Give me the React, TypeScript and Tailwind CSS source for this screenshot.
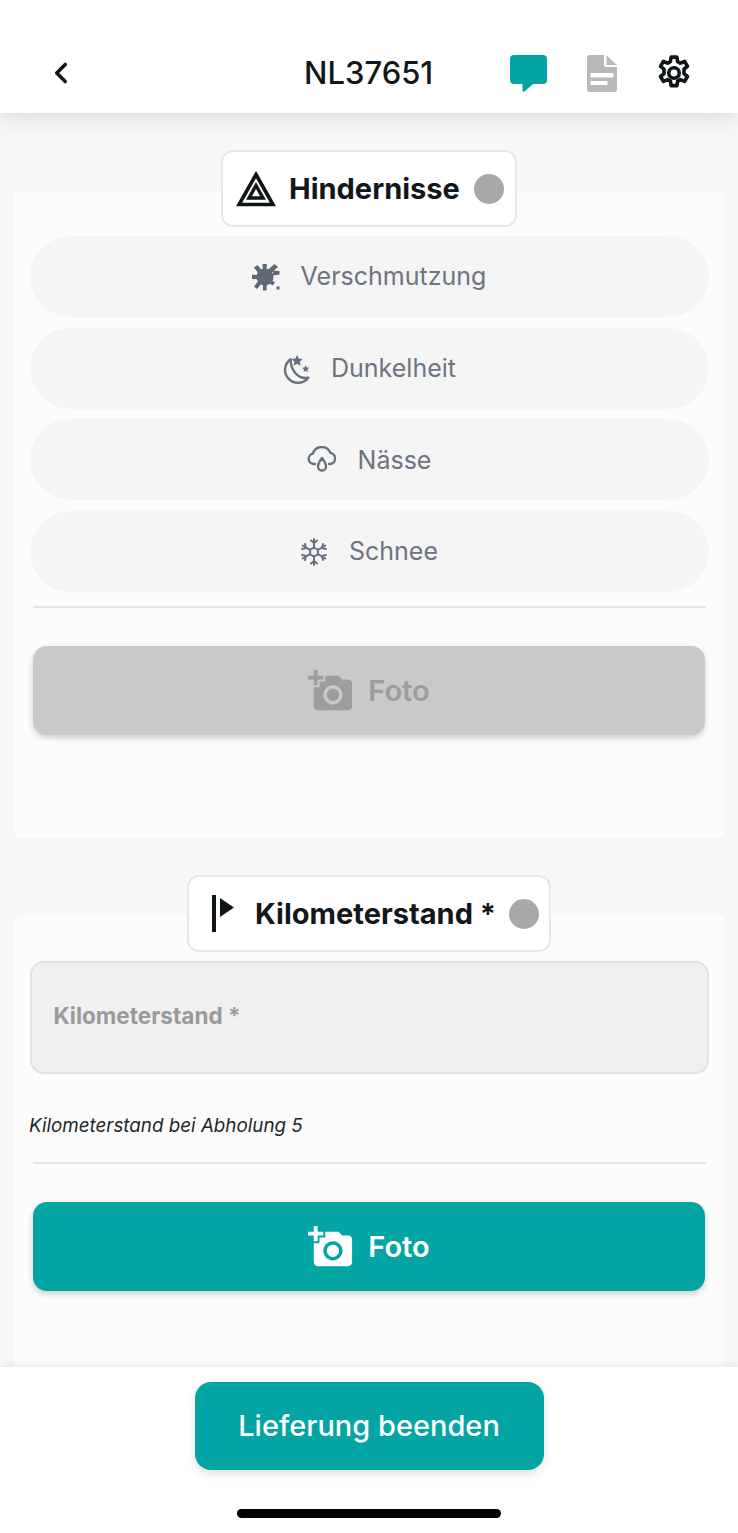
import { ChevronLeft } from 'lucide-react';
import { MdAddAPhoto } from 'react-icons/md';
import type { ReactNode } from 'react';

function ChatIcon() {
  return (
    <svg viewBox="0 0 37 37" className="w-[37px] h-[37px]">
      <path d="M4 0h29a4 4 0 0 1 4 4v21a4 4 0 0 1-4 4H23l-8.500 7.500c-.8.7-2 .2-2-.8V29H4a4 4 0 0 1-4-4V4a4 4 0 0 1 4-4z" fill="#03a5a4" />
    </svg>
  );
}

function FileIcon() {
  return (
    <svg viewBox="0 0 30 37" className="w-[30px] h-[37px]">
      <path d="M2.500 0H17v10a2 2 0 0 0 2 2h11v22.500a2.500 2.500 0 0 1-2.500 2.500h-25A2.500 2.500 0 0 1 0 34.500v-32A2.500 2.500 0 0 1 2.500 0z" fill="#b8b9bb" />
      <path d="M19.500 0.500 30 10h-10.500z" fill="#b8b9bb" />
      <rect x="3.500" y="18" width="23" height="4.500" fill="#fff" />
      <rect x="3.500" y="26" width="17" height="4" fill="#fff" />
    </svg>
  );
}

function GearIcon() {
  return (
    <svg viewBox="0 0 24 24" fill="none" stroke="#0f1417" strokeWidth="2.300" strokeLinejoin="round" className="w-[38px] h-[38px]">
      <path d="M10.200 2h3.600l.5 2.900 1.700.9 2.700-1.100 1.800 3.100-2.200 1.800v2.800l2.200 1.800-1.800 3.100-2.700-1.100-1.700.9-.5 2.900h-3.600l-.5-2.900-1.700-.9-2.700 1.100-1.800-3.100 2.200-1.800V9.600L3.500 7.800l1.800-3.100L8 5.800l1.700-.9z" />
      <circle cx="12" cy="12" r="3.300" />
    </svg>
  );
}

function HazardIcon() {
  return (
    <svg viewBox="0 0 40 36" fill="none" stroke="#0f1417" className="w-[40px] h-[36px]">
      <path d="M20 3.500 37 33.500H3z" strokeWidth="3.600" />
      <path d="M20 14.500 27 27H13z" strokeWidth="3.400" />
    </svg>
  );
}

function FlagIcon() {
  return (
    <svg viewBox="0 0 24 38" className="w-[24px] h-[38px]">
      <rect x="1" y="0" width="4" height="37" fill="#0f1417" />
      <path d="M9 3 23 12.500 9 22z" fill="#0f1417" />
    </svg>
  );
}

function SplatIcon() {
  return (
    <svg viewBox="0 0 28 28" fill="#5f6875" className="w-[28px] h-[28px]">
      <circle cx="13" cy="14" r="8.500" />
      <path d="M10.500 1h4.500l-1 10h-3zM11 27.500h3.500l.5-10h-4zM0 11.500l10 1v4L0 16zM2 4.500l3.500-2.500 6 7.500-3.500 3zM22.500 1l3.500 3-8.500 7.500-3-3.500zM2 23.500l7-9 3.500 2.500-7.500 9zM21 7.500l6.500.5v3.500l-6.500 1zM15 14l8 5.500-2.500 3-8-6z" />
      <circle cx="26" cy="25" r="1.700" />
    </svg>
  );
}

function MoonIcon() {
  return (
    <svg viewBox="2 0 26 26" fill="none" stroke="#687180" strokeWidth="2.200" className="w-[28px] h-[28px] overflow-visible">
      <path d="M10 4a12 12 0 1 0 16.500 17c-8 2-16.500-5-16.500-17z" strokeLinejoin="round" />
      <path d="M16 0l1.600 3.300 3.600.5-2.600 2.500.6 3.600-3.200-1.700-3.200 1.700.6-3.600-2.600-2.500 3.600-.5z" fill="#687180" stroke="none" />
      <path d="M24 9.500l1 2.100 2.300.3-1.700 1.600.4 2.300-2-1.100-2 1.100.4-2.300-1.700-1.600 2.300-.3z" fill="#687180" stroke="none" />
    </svg>
  );
}

function CloudDropIcon() {
  return (
    <svg viewBox="0 0 30 28" fill="none" stroke="#687180" strokeWidth="2.300" strokeLinecap="round" strokeLinejoin="round" className="w-[30px] h-[28px]">
      <path d="M8 18H6.500a5.200 5.200 0 0 1-.6-10.300A9.200 9.200 0 0 1 23.300 6.800 5.700 5.700 0 0 1 23.500 18H22" />
      <path d="M15 12c2 2.700 4 5 4 8.500a4 4 0 0 1-8 0c0-3.500 2-5.800 4-8.500z" />
    </svg>
  );
}

function SnowIcon() {
  return (
    <svg viewBox="0 0 28 28" fill="none" stroke="#687180" strokeWidth="2" strokeLinecap="round" className="w-[28px] h-[28px]">
      <path d="M14 1v8.500M14 18.500V27M2.700 7.500l7.400 4.300M17.900 16.200l7.400 4.300M25.300 7.500l-7.400 4.300M10.100 16.200l-7.400 4.300" />
      <path d="M11 2.500 14 5l3-2.500M11 25.500 14 23l3 2.500M2 11l4-1-1-4M26 17l-4 1 1 4M26 11l-4-1 1-4M2 17l4 1-1 4" />
      <path d="M14 9.500l3.900 2.250v4.500L14 18.500l-3.900-2.250v-4.500z" />
    </svg>
  );
}

function SectionTitle({ icon, label, className }: { icon: ReactNode; label: string; className: string }) {
  return (
    <div className={`relative z-10 mx-auto h-[77px] flex items-center bg-white border-2 border-[#e6e7e9] rounded-[12px] ${className}`}>
      {icon}
      <span className="font-bold text-[29px] text-[#12171b] whitespace-nowrap">{label}</span>
      <span className="ml-auto w-[30px] h-[30px] rounded-full bg-[#a8a8a8]" />
    </div>
  );
}

function OptionRow({ icon, label }: { icon: ReactNode; label: string }) {
  return (
    <div className="h-[81px] pt-[1px] rounded-full bg-[#f5f5f5] flex items-center justify-center gap-[21px] text-[25px] text-[#6d7480]">
      {icon}
      <span>{label}</span>
    </div>
  );
}

function PhotoButton({ disabled }: { disabled?: boolean }) {
  return (
    <div
      className={`mx-[3.500px] h-[89px] rounded-[14px] flex items-center justify-center gap-[14px] font-semibold text-[29px] shadow-[0_3px_6px_rgba(0,0,0,0.18)] ${
        disabled ? 'bg-[#c9c9c9] text-[#9d9d9d]' : 'bg-[#03a5a4] text-white'
      }`}
    >
      <MdAddAPhoto className="w-[46px] h-[46px]" />
      <span>Foto</span>
    </div>
  );
}

export default function App() {
  return (
    <div className="w-[738px] h-[1533px] flex flex-col bg-[#f5f7f9] overflow-hidden font-['Inter',sans-serif]">
      {/* Header */}
      <header className="relative z-20 h-[113px] shrink-0 bg-white shadow-[0_4px_24px_rgba(0,0,0,0.12)] flex items-end pb-[8px] pl-[44px] pr-[45px]">
        <div className="w-[34px] h-[64px] flex items-center">
          <ChevronLeft className="w-[34px] h-[34px] text-[#0f1417]" strokeWidth={2.500} />
        </div>
        <div className="ml-[226px] h-[64px] flex items-center font-medium text-[31px] text-[#12171b]">NL37651</div>
        <div className="ml-auto h-[64px] flex items-center gap-[38px]">
          <span className="mr-[2px] flex"><ChatIcon /></span>
          <FileIcon />
          <GearIcon />
        </div>
      </header>

      <main className="flex-1 min-h-0 overflow-hidden px-[14px] pt-[37px]">
        <SectionTitle
          icon={<span className="mr-[13px]"><HazardIcon /></span>}
          label="Hindernisse"
          className="w-[296px] pl-[13px] pr-[11px] -mb-[36px]"
        />
        <section className="h-[647px] bg-[#fcfcfc] rounded-[6px] px-[15.500px] pt-[45px]">
          <div className="flex flex-col gap-[10.700px]">
            <OptionRow icon={<SplatIcon />} label="Verschmutzung" />
            <OptionRow icon={<MoonIcon />} label="Dunkelheit" />
            <OptionRow icon={<CloudDropIcon />} label="Nässe" />
            <OptionRow icon={<SnowIcon />} label="Schnee" />
          </div>
          <hr className="mx-[3px] mt-[14px] mb-[38px] border-t-2 border-[#e4e4e4]" />
          <PhotoButton disabled />
        </section>

        <SectionTitle
          icon={<span className="mr-[20px]"><FlagIcon /></span>}
          label="Kilometerstand *"
          className="mt-[37px] w-[364px] pl-[22px] pr-[10px] -mb-[37px]"
        />
        <section className="h-[500px] bg-[#fcfcfc] rounded-[6px] px-[15.500px] pt-[46px]">
          <div className="h-[113px] rounded-[14px] bg-[#f0f0f0] border-2 border-[#e2e2e2] flex items-center pl-[22px] pb-[3px] font-bold text-[22.500px] text-[#9a9a9a]">
            Kilometerstand *
          </div>
          <p className="mt-[41px] -ml-[0.500px] italic text-[18.800px] leading-[22px] text-[#22272b]">Kilometerstand bei Abholung 5</p>
          <hr className="mx-[3px] mt-[25px] mb-[38px] border-t-2 border-[#e4e4e4]" />
          <PhotoButton />
        </section>
      </main>

      {/* Footer */}
      <footer className="relative z-20 h-[166px] shrink-0 bg-white shadow-[0_-2px_8px_rgba(0,0,0,0.08)] flex flex-col items-center pt-[15px]">
        <div className="w-[349px] h-[88px] rounded-[16px] bg-[#03a5a4] flex items-center justify-center font-medium text-[29px] text-white shadow-[0_4px_10px_rgba(0,0,0,0.12)]">
          Lieferung beenden
        </div>
        <div className="mt-[39px] w-[264px] h-[9px] rounded-full bg-black" />
      </footer>
    </div>
  );
}
